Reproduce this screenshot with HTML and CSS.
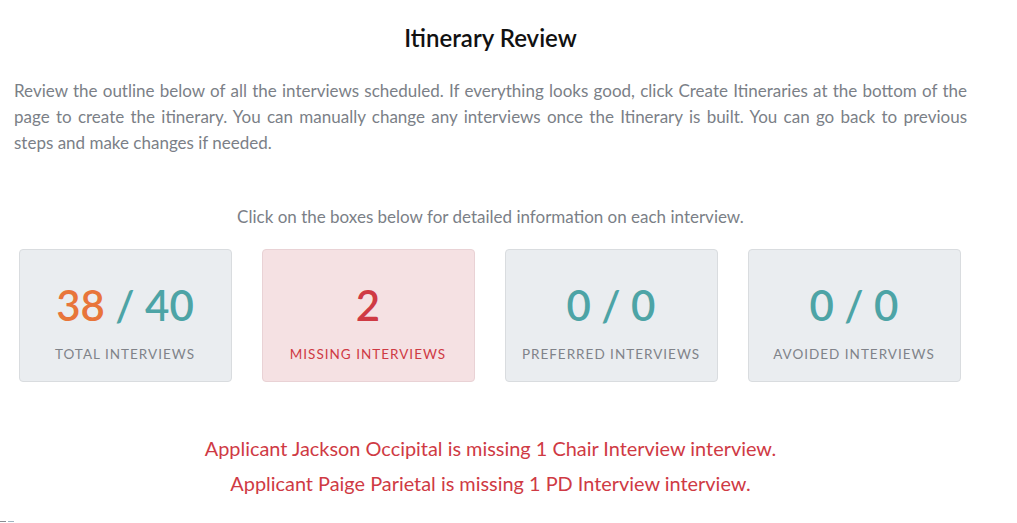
FILE: index.html
```html
<!DOCTYPE html>
<html>
  <head>
    <title>Itinerary Review</title>
    <meta charset="utf-8">
    <link rel="stylesheet" href="styles.css">
  </head>
  <body>
    <div class="review">
      <h1 class="review-title">Itinerary Review</h1>
      <p class="review-intro">Review the outline below of all the interviews scheduled. If everything looks good, click Create Itineraries at the bottom of the page to create the itinerary. You can manually change any interviews once the Itinerary is built. You can go back to previous steps and make changes if needed.</p>

      <p class="review-hint">Click on the boxes below for detailed information on each interview.</p>

      <div class="stat-row">
        <div class="stat-box">
          <div class="stat-num"><span class="orange">38</span> / 40</div>
          <div class="stat-label">Total Interviews</div>
        </div>
        <div class="stat-box missing">
          <div class="stat-num">2</div>
          <div class="stat-label">Missing Interviews</div>
        </div>
        <div class="stat-box">
          <div class="stat-num">0 / 0</div>
          <div class="stat-label">Preferred Interviews</div>
        </div>
        <div class="stat-box">
          <div class="stat-num">0 / 0</div>
          <div class="stat-label">Avoided Interviews</div>
        </div>
      </div>

      <div class="missing-list">
        <p>Applicant Jackson Occipital is missing 1 Chair Interview interview.</p>
        <p>Applicant Paige Parietal is missing 1 PD Interview interview.</p>
      </div>
    </div>
    <div class="page-stub"><span></span><span class="stub-b"></span></div>
  </body>
</html>
```

FILE: styles.css
```css
body
{
  margin: 0;
  background: #fff;
  font-family: Lato, "Open Sans", sans-serif;
}

.review
{
  width: 953px;
  padding: 0 0 0 14px;
}

.review-title
{
  margin: 0;
  padding-top: 24px;
  text-align: center;
  font-size: 24px;
  font-weight: 600;
  color: #111;
  line-height: 28px;
}

.review-intro
{
  margin: 26px 0 0 0;
  font-size: 17px;
  line-height: 26px;
  color: #7b7f87;
  text-align: justify;
}

.review-hint
{
  margin: 50px 0 0 0;
  text-align: center;
  font-size: 17px;
  line-height: 22px;
  color: #7b7f87;
}

.stat-row
{
  display: flex;
  justify-content: center;
  gap: 30px;
  margin: 21px 2px 0 0;
}

.stat-box
{
  width: 211px;
  height: 131px;
  background: #eaedf0;
  border: 1px solid #d9dcdf;
  border-radius: 4px;
  display: flex;
  flex-direction: column;
  align-items: center;
  color: #4da4a6;
}

.stat-box.missing
{
  background: #f5e1e3;
  border-color: #e9d2d5;
  color: #cf3a44;
}

.stat-num
{
  margin-top: 33px;
  font-size: 42px;
  line-height: 44px;
  font-weight: 600;
}

.orange
{
  color: #e8753a;
}

.stat-label
{
  margin-top: 19px;
  font-size: 13.5px;
  letter-spacing: 1px;
  text-transform: uppercase;
  color: #808389;
}

.stat-box.missing .stat-label
{
  color: #cf3a44;
}

.missing-list
{
  margin-top: 54px;
  text-align: center;
  color: #cf3a44;
  font-size: 19.9px;
  line-height: 24px;
}

.missing-list p
{
  margin: 0 0 11px 0;
}

.page-stub
{
  display: flex;
  gap: 2px;
  margin-top: 26px;
}

.page-stub span
{
  width: 6px;
  height: 1px;
  background: #8a8d93;
}

.page-stub .stub-b
{
  background: #9fb4c0;
}
```
